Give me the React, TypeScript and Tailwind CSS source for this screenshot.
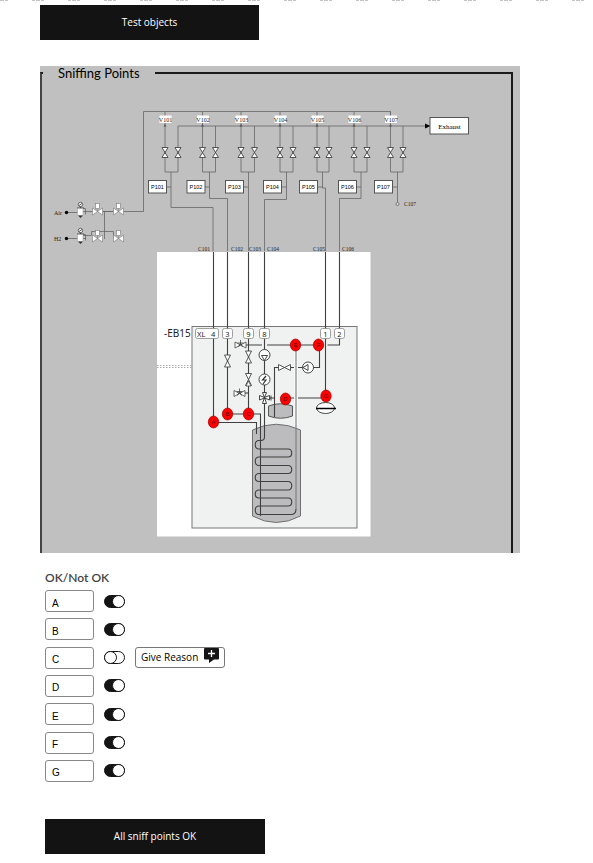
import { useState } from "react";

const INK = "#666";

type Channel = {
  id: string;
  left: number;
  right: number;
  stem: number;
  box: number;
  route: string;
};

const channels: Channel[] = [
  { id: "101", left: 165, right: 178, stem: 171, box: 148.5, route: "M171 172V207.5H213V251" },
  { id: "102", left: 202.5, right: 215.5, stem: 209.5, box: 187, route: "M209.5 172V198.5H227.5V251" },
  { id: "103", left: 241, right: 254.5, stem: 248.5, box: 225.5, route: "M248.5 172V251" },
  { id: "104", left: 280, right: 293, stem: 286.5, box: 263.5, route: "M286.5 172V199.5H264.5V251" },
  { id: "105", left: 317, right: 329, stem: 322.5, box: 299.5, route: "M322.5 172V188H325.5V251" },
  { id: "106", left: 354, right: 367, stem: 361, box: 338.5, route: "M361 172V198.5H339.5V251" },
  { id: "107", left: 390.5, right: 403, stem: 397.5, box: 374.5, route: "M397.5 172V202" },
];

const connections = [
  { name: "C101", x: 198, y: 251 },
  { name: "C102", x: 231, y: 251 },
  { name: "C103", x: 249, y: 251 },
  { name: "C104", x: 267, y: 251 },
  { name: "C105", x: 313, y: 251 },
  { name: "C106", x: 342, y: 251 },
  { name: "C107", x: 404, y: 206 },
];

const ports = [
  { label: "3", x: 227.5 },
  { label: "9", x: 248.5 },
  { label: "8", x: 264.5 },
  { label: "1", x: 325.5 },
  { label: "2", x: 339.5 },
];

const sniffPoints = [
  { label: "A", x: 213.5, y: 422 },
  { label: "B", x: 227.5, y: 414 },
  { label: "C", x: 248.5, y: 414 },
  { label: "D", x: 285.5, y: 399 },
  { label: "E", x: 295.5, y: 345 },
  { label: "F", x: 318.5, y: 345 },
  { label: "G", x: 326, y: 396 },
];

function Valve({ x, y, h = 5 }: { x: number; y: number; h?: number }) {
  return (
    <path
      d={`M${x - 3} ${y - h}h6L${x - 3} ${y + h}h6Z`}
      fill="#fff"
      stroke="#444"
      strokeWidth="0.9"
    />
  );
}

function SolenoidValve({ x, y }: { x: number; y: number }) {
  return (
    <g fill="#fff" stroke="#777" strokeWidth="0.6">
      <path d={`M${x - 5} ${y - 3.5}L${x + 5} ${y + 3.5}V${y - 3.5}L${x - 5} ${y + 3.5}Z`} />
      <path d={`M${x} ${y}v-3`} />
      <rect x={x - 2} y={y - 8} width="4" height="5" />
    </g>
  );
}

function Regulator({ y }: { y: number }) {
  return (
    <g>
      <path d={`M66 ${y}H78M83 ${y - 4}h2.5v6`} stroke={INK} strokeWidth="0.8" fill="none" />
      <circle cx="66.5" cy={y} r="1.7" fill="#000" />
      <circle cx="80.5" cy={y - 8} r="2.2" fill="#fff" stroke="#333" strokeWidth="0.7" />
      <path d={`M79 ${y - 7}l3-2M80.5 ${y - 6}v2M77 ${y - 4.5}h7`} stroke="#333" strokeWidth="0.8" />
      <rect x="77.5" y={y - 4} width="5.5" height="7" fill="#fff" stroke="#999" strokeWidth="0.5" />
      <path d={`M78 ${y + 3}h5l-2.5 2.5Z`} fill="#333" />
    </g>
  );
}

function ReliefValve({ x, y }: { x: number; y: number }) {
  return (
    <g fill="#fff" stroke="#444" strokeWidth="0.8">
      <path d={`M${x - 5.5} ${y - 3}L${x} ${y}L${x - 5.5} ${y + 3}ZM${x + 5.5} ${y - 3}L${x} ${y}L${x + 5.5} ${y + 3}Z`} />
      <path d={`M${x} ${y}v-5M${x - 3} ${y - 2}l6 0M${x - 2} ${y + 2}l2-4 2 4`} fill="none" />
    </g>
  );
}

function SniffingDiagram() {
  return (
    <svg viewBox="42 80 469 473" className="block h-auto w-full" role="img" aria-label="Sniffing points diagram">
      {/* Supply manifold */}
      <g fill="none" stroke={INK} strokeWidth="0.8">
        <path d="M102 211.5H143.5V111.5H390.5V118" />
        <path d="M83 211.5H114M178 126H425" />
        <path d="M104.5 211.5V239M83 235.5H91.5V231.5H113.5V238M83 238.5H86" />
      </g>
      <path d="M425 123.5L430.5 126L425 128.5Z" fill="#000" />
      <rect x="430" y="117.5" width="38.5" height="16.5" fill="#fff" stroke="#555" />
      <text x="449.5" y="128.5" fontSize="7" textAnchor="middle" className="font-['Liberation_Serif',serif]">
        Exhaust
      </text>

      {channels.map((c) => (
        <g key={c.id}>
          <g fill="none" stroke={INK} strokeWidth="0.8">
            <path d={`M${c.left} 111.5V172H${c.right}V126`} />
            <path d={c.route} />
            <path d={`M${c.box + 18} 187H${c.stem}`} />
          </g>
          <path d={`M${c.left - 1.5} 126.5h3l-1.5-2.5Z`} fill="#555" />
          <rect x={c.left - 5.5} y="115.5" width="12" height="7.5" fill="#fff" />
          <text x={c.left + 0.5} y="121.5" fontSize="6" fill="#222" textAnchor="middle" className="font-['Liberation_Serif',serif]">
            {`V${c.id}`}
          </text>
          <Valve x={c.left} y={152.5} />
          <Valve x={c.right} y={152.5} />
          <rect x={c.box} y="180.5" width="18" height="12.5" fill="#fff" stroke="#555" />
          <text x={c.box + 9} y="189" fontSize="5.5" textAnchor="middle" className="font-['Liberation_Sans',sans-serif]">
            {`P${c.id}`}
          </text>
        </g>
      ))}
      <circle cx="397.5" cy="204" r="1.5" fill="#ddd" stroke="#555" strokeWidth="0.7" />

      {connections.map((c) => (
        <text key={c.name} x={c.x} y={c.y} fontSize="5.5" fill="#222" className="font-['Liberation_Serif',serif]">
          {c.name}
        </text>
      ))}

      <g fontSize="6" fill="#222" className="font-['Liberation_Serif',serif]">
        <text x="54" y="215">Air</text>
        <text x="54" y="240.5">H2</text>
      </g>
      <Regulator y={212.5} />
      <Regulator y={238.5} />
      <SolenoidValve x={97.5} y={211.5} />
      <SolenoidValve x={118.5} y={211.5} />
      <SolenoidValve x={97.5} y={238.5} />
      <SolenoidValve x={118.5} y={238.5} />

      {/* Unit under test */}
      <rect x="157" y="252" width="213.5" height="284.5" fill="#fff" />
      <rect x="192" y="326.5" width="165" height="201.5" fill="#f0f2f1" stroke="#777" />
      <path d="M157 365.5H192M157 367.5H192" stroke="#999" strokeWidth="0.8" strokeDasharray="1.5 1.5" />
      <text x="164" y="337" fontSize="10" fill="#222" className="font-['Noto_Sans',sans-serif]">
        -EB15
      </text>

      {/* Storage tank and expansion vessel */}
      <path d="M252.5 430Q276 418.5 300.5 430V516Q276 529 252.5 516Z" fill="#bcbcbe" stroke="#707070" />
      <path d="M268.5 406Q280.5 401.5 292.5 406V416Q280.5 420.5 268.5 416Z" fill="#bcbcbe" stroke="#555" />

      <g fill="none" stroke="#404040" strokeWidth="1.1">
        <path d="M213.5 252V422.5H256.5V434" />
        <path d="M227.5 252V414H260.5V516" />
        <path d="M248.5 252V414" />
        <path d="M264.5 252V437Q264.5 440.5 261 440.5H259C254 440.5 254 449 259 449H288C293 449 293 457 288 457H259C254 457 254 465.5 259 465.5H288C293 465.5 293 473.5 288 473.5H259C254 473.5 254 481.5 259 481.5H288C293 481.5 293 490 288 490H259C254 490 254 498 259 498H288C293 498 293 506 288 506H259C254 506 254 514.5 259 514.5H291Q296 514.5 296 509" />
        <path d="M339.5 252V345H327.5M246 345H262M267 345H323.5" />
        <path d="M325.5 252V391" />
        <path d="M319.5 345V367.5H302M302 367.5H298M294 367.5H291M279 367.5H274.5V417" />
        <path d="M270 398H274M285 398H294M298 398H326" />
        <path d="M240 393H248" />
      </g>
      <path d="M296 345V425" stroke="#fff" strokeWidth="3" />
      <path d="M296 345V509" stroke="#808080" strokeWidth="1.2" />

      <Valve x={227.5} y={361} h={6} />
      <Valve x={248.5} y={357} h={6} />
      <Valve x={248.5} y={379.5} h={6} />
      <ReliefValve x={240.5} y={345} />
      <ReliefValve x={239.5} y={393.5} />
      <path d="M246 386l2.5-5 2.5 5Z" fill="#fff" stroke="#444" strokeWidth="0.8" />
      <path d="M278.5 364.5V370.5L290.5 364.5V370.5Z" fill="#fff" stroke="#444" strokeWidth="0.9" />

      <g fill="#fff" stroke="#333" strokeWidth="0.9">
        <circle cx="264.5" cy="355" r="5.5" />
        <path d="M261.5 355.5h6l-3 5Z" />
        <circle cx="264.5" cy="379.5" r="5.5" />
        <path d="M266 376l-3.5 4h3.5l-3 4" fill="none" strokeWidth="1.2" />
        <circle cx="308" cy="367.5" r="5.5" />
        <path d="M308 364.5v6l-5-3Z" />
        <path d="M262.5 392.5h4l-2 5 2 6h-4l2-6ZM259.5 395.5v4.5l5-2 5 2v-4.5l-5 2Z" />
        <path d="M271 395.5v5" />
        <ellipse cx="325.5" cy="408" rx="9" ry="5.5" />
        <path d="M316 408.5H336" strokeWidth="1.5" stroke="#000" />
      </g>

      <g className="font-['Noto_Sans',sans-serif]" fontSize="7.5" fill="#222">
        <rect x="195.5" y="328.5" width="23" height="10" rx="2" fill="#fff" stroke="#888" strokeWidth="0.8" />
        <text x="197" y="336.5">XL</text>
        <text x="211" y="336.5">4</text>
        {ports.map((p) => (
          <g key={p.label}>
            <rect x={p.x - 5} y="328.5" width="10" height="10" rx="2" fill="#fff" stroke="#888" strokeWidth="0.8" />
            <text x={p.x} y="336.5" textAnchor="middle">
              {p.label}
            </text>
          </g>
        ))}
      </g>

      {sniffPoints.map((p) => (
        <g key={p.label}>
          <ellipse cx={p.x} cy={p.y} rx="5.2" ry="6" fill="#fe0000" stroke="#9c0000" strokeWidth="0.7" />
          <text x={p.x} y={p.y + 2} fontSize="6" fill="#600000" textAnchor="middle" className="font-['Liberation_Sans',sans-serif]">
            {p.label}
          </text>
        </g>
      ))}
    </svg>
  );
}

function Toggle({ label, checked, onChange }: { label: string; checked: boolean; onChange: () => void }) {
  return (
    <input
      type="checkbox"
      role="switch"
      aria-label={`Point ${label} OK`}
      checked={checked}
      onChange={onChange}
      className="relative h-[13px] w-[21px] shrink-0 appearance-none rounded-full border border-[#141414] bg-white before:absolute before:top-[-1px] before:left-[-1px] before:size-[13px] before:rounded-full before:border before:border-[#141414] before:bg-white checked:bg-[#141414] checked:before:left-[7px]"
    />
  );
}

function CommentIcon() {
  return (
    <svg width="15" height="15" viewBox="0 0 15 15" className="self-start" aria-hidden="true">
      <path d="M1 0H14Q15 0 15 1V10.5Q15 11.5 14 11.5H10L5 15V11.5H1Q0 11.5 0 10.500V1Q0 0 1 0Z" fill="#141414" />
      <path d="M7.5 2V9M4 5.5H11" stroke="#fff" strokeWidth="1.3" />
    </svg>
  );
}

export default function App() {
  const [points, setPoints] = useState([
    { label: "A", ok: true },
    { label: "B", ok: true },
    { label: "C", ok: false },
    { label: "D", ok: true },
    { label: "E", ok: true },
    { label: "F", ok: true },
    { label: "G", ok: true },
  ]);

  const toggle = (label: string) =>
    setPoints((list) => list.map((p) => (p.label === label ? { ...p, ok: !p.ok } : p)));

  return (
    <div className="overflow-x-hidden bg-white font-['Open_Sans','Noto_Sans',sans-serif] text-black">
      <div className="-ml-1 flex h-px gap-6" aria-hidden="true">
        {Array.from({ length: 17 }, (_, i) => (
          <span key={i} className="flex w-3 shrink-0 gap-px">
            <span className="h-px grow bg-[#c4c4c4]" />
            <span className="h-px grow bg-[#c4c4c4]" />
            <span className="h-px grow bg-[#c4c4c4]" />
          </span>
        ))}
      </div>

      <main className="px-10 pt-1 pb-2">
        <button type="button" className="block h-[35px] w-[219px] bg-[#131313] text-[10px] font-medium text-white">
          Test objects
        </button>

        <section className="mt-[26px] w-full max-w-[480px] bg-[#c0c0c0] pr-[7px]">
          <fieldset className="min-w-0 border-x-2 border-t-2 border-l-[#444] border-r-[#1a1a1a] border-t-[#1a1a1a]">
            <legend className="ml-px pr-[15px] pl-[15px] font-['Lato',sans-serif] text-[13px] leading-[14px]">
              Sniffing Points
            </legend>
            <SniffingDiagram />
          </fieldset>
        </section>

        <section className="mt-4 pl-[5px]">
          <h2 className="font-['Lato',sans-serif] text-[12px] leading-[18px] font-semibold text-[#444]">OK/Not OK</h2>
          <ul className="mt-[3px] flex h-48 flex-col justify-between">
            {points.map((p) => (
              <li key={p.label} className="flex h-[22px] items-center">
                <input
                  type="text"
                  aria-label={`Point ${p.label}`}
                  defaultValue={p.label}
                  className="mr-[10px] h-[22px] w-[49px] rounded-[3px] border border-[#888] px-1.5 pt-1 font-['Liberation_Sans',sans-serif] text-[10px]"
                />
                <Toggle label={p.label} checked={p.ok} onChange={() => toggle(p.label)} />
                {!p.ok && (
                  <button
                    type="button"
                    className="ml-[10px] flex h-[21px] w-[90px] items-center justify-between rounded-[3px] border border-[#777] px-[5px] text-[10px]"
                  >
                    Give Reason
                    <CommentIcon />
                  </button>
                )}
              </li>
            ))}
          </ul>
          <button type="button" className="mt-[37px] block h-[35px] w-[220px] bg-[#131313] text-[10px] font-medium text-white">
            All sniff points OK
          </button>
        </section>
      </main>
    </div>
  );
}
